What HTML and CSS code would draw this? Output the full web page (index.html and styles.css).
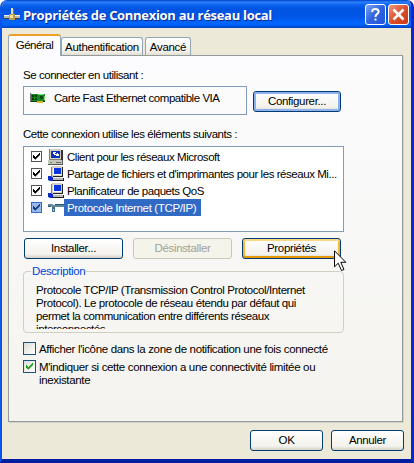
FILE: index.html
```html
<!DOCTYPE html>
<html lang="fr">
<head>
    <meta charset="UTF-8">
    <meta name="viewport" content="width=device-width, initial-scale=1.0">
    <title>Propriétés de Connexion au réseau local</title>
    <link rel="stylesheet" href="styles.css">
</head>
<body>
    <!-- Shared icons -->
    <svg width="0" height="0" class="defs">
        <symbol id="tick" viewBox="0 0 9 9">
            <path d="M1 3h1v1h1v1h1V4h1V3h1V2h1V1h1v2.500H7v1H6v1H5v1H4v1H3V7H2V6H1z" fill="currentColor"/>
        </symbol>
        <symbol id="service" viewBox="0 0 16 16">
            <path d="M4 0h10v10H4z" fill="#d4d0c8"/>
            <path d="M3 1h1v9H3z" fill="#808080"/>
            <path d="M14 1h1v10h-1zM5 10h9v1H5z" fill="#222"/>
            <path d="M5 2h8v7H5z" fill="#fff"/>
            <path d="M6 2h7v6H6z" fill="#0a35e0"/>
            <path d="M4 11h10v1H4z" fill="#eee"/>
            <path d="M4 12h11v2H4z" fill="#b8b8b8"/>
            <path d="M4 14h11v1H4zM15 12h1v3h-1z" fill="#222"/>
            <path d="M0 10h3l2 1v4H2l-2-1z" fill="#0a2cc0"/>
        </symbol>
    </svg>

    <div class="window">
        <!-- Title bar -->
        <div class="title-bar">
            <svg class="title-icon" width="16" height="13" viewBox="0 0 16 13">
                <path d="M7 0h2v6H7z" fill="#e8dfb8"/>
                <path d="M9 1h1v5H9z" fill="#8a7a4a"/>
                <path d="M0 7h16v3H0z" fill="#b8b8b0"/>
                <path d="M0 7h16v1H0z" fill="#eee"/>
                <path d="M0 10h16v1H0z" fill="#444"/>
                <path d="M5 6h6v6H5z" fill="#b99a4c"/>
                <path d="M6 7h3v3H6z" fill="#f1e3a5"/>
            </svg>
            <h1>Propriétés de Connexion au réseau local</h1>
            <button class="caption-btn help-btn" aria-label="Aide">
                <svg width="19" height="19" viewBox="0 0 19 19">
                    <path d="M6.300 7V5.500Q6.800 4 9.500 4t3.200 2.400q0 1.400-1.500 2.500T9.500 11.500V12" fill="none" stroke="#fff" stroke-width="2"/>
                    <path d="M8.500 13.500h2v2h-2z" fill="#fff"/>
                </svg>
            </button>
            <button class="caption-btn close-btn" aria-label="Fermer">
                <svg width="19" height="19" viewBox="0 0 19 19">
                    <path d="M4.500 4.500l10 10M14.500 4.500l-10 10" stroke="#fff" stroke-width="2.600"/>
                </svg>
            </button>
        </div>

        <div class="tabs">
            <div class="tab active">Général</div>
            <div class="tab tab-auth">Authentification</div>
            <div class="tab tab-adv">Avancé</div>
        </div>

        <div class="panel">
            <p class="label">Se connecter en utilisant :</p>
            <div class="adapter-row">
                <div class="adapter">
                    <svg width="16" height="11" viewBox="0 0 16 11">
                        <path d="M0 0h1v9H0z" fill="#777"/>
                        <path d="M1 1h14v7H1z" fill="#168a1e"/>
                        <path d="M2 2h2v2H2zM5 2h2v2H5zM2 5h2v2H2zM5 5h2v2H5z" fill="#063b08"/>
                        <path d="M8 1h6v1H8zM14 3h1v4h-1z" fill="#7fe070"/>
                        <path d="M10 3h3v3h-3z" fill="#0c4f12"/>
                        <path d="M1 8h14v1H1z" fill="#0a3a0c"/>
                        <path d="M7 8h6v2H7z" fill="#d5b52a"/>
                    </svg>
                    <span>Carte Fast Ethernet compatible VIA</span>
                </div>
                <button class="btn focused btn-config">Configurer...</button>
            </div>

            <p class="label">Cette connexion utilise les éléments suivants :</p>
            <ul class="items">
                <li>
                    <span class="check"><svg width="9" height="9"><use href="#tick"/></svg></span>
                    <svg class="item-icon" width="16" height="16" viewBox="0 0 16 16">
                        <path d="M1 0h12v10H1z" fill="#d4d0c0"/>
                        <path d="M1 0h1v10H1zM1 10h12v1H1z" fill="#808080"/>
                        <path d="M13 1h2v10h-2z" fill="#333"/>
                        <path d="M3 2h9v7H3z" fill="#0a2fc0"/>
                        <path d="M5 3h3v1h2v1h1v2H8V6H6V5H5z" fill="#fff"/>
                        <path d="M7 4h2v1H7z" fill="#1748d8"/>
                        <path d="M0 11h14v4H0z" fill="#c9c7bb"/>
                        <path d="M0 15h15v1H0zM14 11h1v4h-1z" fill="#555"/>
                        <path d="M2 13h2v1H2z" fill="#20b030"/>
                        <path d="M8 13h5v1H8z" fill="#666"/>
                    </svg>
                    <span class="name">Client pour les réseaux Microsoft</span>
                </li>
                <li>
                    <span class="check"><svg width="9" height="9"><use href="#tick"/></svg></span>
                    <svg class="item-icon" width="16" height="16"><use href="#service"/></svg>
                    <span class="name">Partage de fichiers et d'imprimantes pour les réseaux Mi...</span>
                </li>
                <li>
                    <span class="check"><svg width="9" height="9"><use href="#tick"/></svg></span>
                    <svg class="item-icon" width="16" height="16"><use href="#service"/></svg>
                    <span class="name">Planificateur de paquets QoS</span>
                </li>
                <li class="selected">
                    <span class="check"><svg width="9" height="9"><use href="#tick"/></svg></span>
                    <svg class="item-icon" width="16" height="16" viewBox="0 0 16 16">
                        <path d="M0 4h4l2 1h10v2H7L5 8 3 6H0z" fill="#5f8799"/>
                        <path d="M7 4h9v1H7zM0 6h3v1H0z" fill="#2b5674"/>
                        <path d="M4 7h3v5H4z" fill="#44728a"/>
                        <path d="M5 9h1v2H5z" fill="#a9c6cf"/>
                    </svg>
                    <span class="name">Protocole Internet (TCP/IP)</span>
                </li>
            </ul>

            <div class="actions">
                <button class="btn">Installer...</button>
                <button class="btn" disabled>Désinstaller</button>
                <button class="btn hot">Propriétés
                    <svg class="cursor" width="13" height="22" viewBox="0 0 13 22">
                        <path d="M.5 .8v16l3.700-3.600 3.300 7.300 2.500-1-3.200-7.200h5z" fill="#fff" stroke="#000"/>
                    </svg>
                </button>
            </div>

            <fieldset class="description">
                <legend>Description</legend>
                <p>Protocole TCP/IP (Transmission Control Protocol/Internet<br>
                Protocol). Le protocole de réseau étendu par défaut qui<br>
                permet la communication entre différents réseaux<br>
                interconnectés.</p>
            </fieldset>

            <div class="option">
                <span class="box"></span>
                <span class="option-text">Afficher l'icône dans la zone de notification une fois connecté</span>
            </div>
            <div class="option">
                <span class="box"><svg width="9" height="9"><use href="#tick"/></svg></span>
                <span class="option-text">M'indiquer si cette connexion a une connectivité limitée ou<br>inexistante</span>
            </div>
        </div>

        <div class="footer">
            <button class="btn">OK</button>
            <button class="btn">Annuler</button>
        </div>
    </div>
</body>
</html>
```
FILE: styles.css
```css
/* Basic Reset */
* {
    margin: 0;
    padding: 0;
    box-sizing: border-box;
}

body {
    background-color: #fff;
    color: #000;
    font-family: "Liberation Sans", Arial, sans-serif;
    font-size: 11.5px;
    line-height: 13px;
    letter-spacing: -0.45px;
    white-space: nowrap;
    overflow: hidden;
}

.defs {
    position: absolute;
}

svg {
    flex-shrink: 0;
    display: block;
}

/* Window */
.window {
    width: 414px;
    height: 463px;
    background-color: #ece9d8;
    border: solid;
    border-width: 0 3px 4px 2px;
    border-color: #0831d9 #0a28c8 #001ea0 #0855ee;
    border-radius: 7px 7px 0 0;
    overflow: hidden;
}

.title-bar {
    height: 28px;
    margin: 0 -3px 0 -2px;
    padding: 1px 5px 0 4px;
    display: flex;
    align-items: center;
    color: #fff;
    background: linear-gradient(#0040c8 0, #2a82ff 2px, #0a62ee 5px, #0054e0 9px, #0056e8 17px, #0066ff 23px, #0062f8 25px, #0040c0 28px);
}

.title-bar h1 {
    flex: 1;
    margin-left: 3px;
    font-family: "Open Sans", sans-serif;
    font-size: 13px;
    line-height: 18px;
    letter-spacing: -0.3px;
    text-shadow: 1px 1px #0a2a90;
}

.caption-btn {
    width: 21px;
    height: 21px;
    border: 1px solid #fff;
    border-radius: 3px;
}

.help-btn {
    margin-right: 2px;
    background: linear-gradient(135deg, #7ba2f2, #2f62e0 50%, #2357d8);
}

.close-btn {
    background: linear-gradient(135deg, #f09a80, #dc4f2a 50%, #c83a12);
}

/* Tabs */
.tabs {
    display: flex;
    align-items: flex-end;
    height: 27px;
    padding-left: 6px;
}

.tab {
    height: 18px;
    border: 1px solid #91a7b4;
    border-bottom: none;
    border-radius: 3px 3px 0 0;
    background: linear-gradient(#fff, #f1f0e8 80%, #e2dfd0);
    text-align: center;
    line-height: 19px;
    letter-spacing: -0.3px;
}

.tab.active {
    position: relative;
    width: 53px;
    height: 22px;
    margin-bottom: -1px;
    background: #fcfcfe;
    border-top: 2px solid #f0a028;
    line-height: 18px;
    letter-spacing: -0.5px;
}

.tab-auth {
    width: 82px;
    margin-right: 2px;
}

.tab-adv {
    width: 46px;
}

/* Panel */
.panel {
    width: 395px;
    height: 367px;
    margin-left: 6px;
    padding: 13px 0 0 14px;
    border: 1px solid #919b9c;
    box-shadow: 1px 1px #d5d2c3;
    background: linear-gradient(#fcfcfe, #f4f3ee);
}

.adapter-row {
    display: flex;
    align-items: center;
    gap: 6px;
    height: 29px;
    margin: 4px 0 13px;
}

.adapter {
    display: flex;
    gap: 8px;
    width: 224px;
    height: 29px;
    padding: 6px 0 0 6px;
    border: 1px solid #7f9db9;
}

.adapter span {
    margin-top: -1px;
}

/* Buttons */
.btn {
    width: 99px;
    height: 21px;
    border: 1px solid #003c74;
    border-radius: 3px;
    background: linear-gradient(#fff, #f3f2ec 80%, #d6d0c5);
    color: #000;
    font: inherit;
    letter-spacing: -0.35px;
}

.btn.focused {
    box-shadow: inset 0 0 0 2px #8fb2ee;
}

.btn-config {
    width: 88px;
    margin-top: 2px;
}

.btn.hot {
    position: relative;
    box-shadow: inset 0 2px #fdd889, inset 0 -2px #e59700, inset 2px 0 #f8b636, inset -2px 0 #f8b636;
}

.btn:disabled {
    border-color: #c9c7ba;
    background: #f5f4ea;
    color: #a1a192;
}

.cursor {
    position: absolute;
    left: 91px;
    top: 11px;
}

/* Component list */
.items {
    width: 321px;
    height: 86px;
    margin-top: 5px;
    padding-top: 1px;
    list-style: none;
    background-color: #fff;
    border: 1px solid #7f9db9;
}

.items li {
    display: flex;
    align-items: center;
    height: 17px;
    padding-left: 7px;
}

.check {
    width: 11px;
    height: 11px;
    border: 1px solid #555;
}

.item-icon {
    margin-left: 6px;
}

.name {
    height: 17px;
    padding: 0 5px 0 3px;
    line-height: 18px;
}

.selected .check {
    background-color: #9bb8ec;
    border-color: #316ac5;
    color: #123c80;
}

.selected .name {
    background-color: #316ac5;
    color: #fff;
    letter-spacing: -0.35px;
}

.actions {
    display: flex;
    gap: 10px;
    margin: 6px 0 0 1px;
}

/* Description */
.description {
    width: 321px;
    height: 68px;
    margin-top: 6px;
    padding: 5px 0 0 12px;
    border: 1px solid #d0d0bf;
    border-radius: 4px;
}

.description legend {
    margin-left: -5px;
    padding: 0 1px;
    color: #0046d5;
    letter-spacing: -0.4px;
}

.description p {
    height: 46px;
    padding-top: 1px;
    overflow: hidden;
    letter-spacing: -0.4px;
}

/* Options */
.option {
    display: flex;
    gap: 3px;
    margin-top: 5px;
}

.description + .option {
    margin-top: 9px;
    height: 13px;
}

.option-text {
    padding-top: 1px;
    letter-spacing: -0.34px;
}

.box {
    width: 13px;
    height: 13px;
    padding: 1px;
    border: 1px solid #1d5180;
    background: linear-gradient(135deg, #dcdcd7, #fff);
    color: #21a121;
}

/* Footer */
.footer {
    display: flex;
    justify-content: flex-end;
    gap: 8px;
    padding: 8px 7px 0 0;
}

.footer .btn {
    width: 73px;
}
```
